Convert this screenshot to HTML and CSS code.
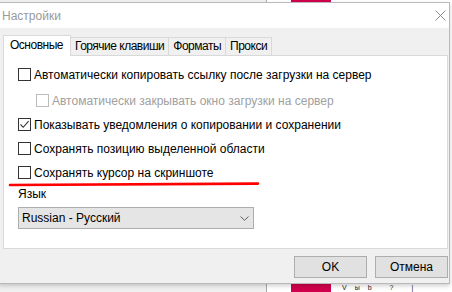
FILE: index.html
```html
<!DOCTYPE html>
<html lang="ru">
<head>
<meta charset="utf-8">
<title>Настройки</title>
<link rel="stylesheet" href="styles.css">
</head>
<body>
<div class="desk">
  <div class="desk-left"></div>
  <div class="desk-pink"></div>
  <div class="desk-text">Vыb ? |</div>

  <div class="dialog">
    <div class="titlebar">
      <span class="title">Настройки</span>
      <svg class="close" width="11" height="11" viewBox="0 0 11 11"><path d="M0.5 0.5 L10.5 10.5 M10.5 0.5 L0.5 10.5" stroke="#8c8c8c" stroke-width="1" fill="none"/></svg>
    </div>
    <div class="client">
      <div class="tabs">
        <div class="tab active">Основные</div>
        <div class="tab">Горячие клавиши</div>
        <div class="tab">Форматы</div>
        <div class="tab">Прокси</div>
      </div>
      <div class="panel">
        <div class="row first"><span class="box"></span><span>Автоматически копировать ссылку после загрузки на сервер</span></div>
        <div class="row sub disabled"><span class="box"></span><span>Автоматически закрывать окно загрузки на сервер</span></div>
        <div class="row"><span class="box"><svg width="11" height="11" viewBox="0 0 11 11"><path d="M1.5 5.5 L4.2 8.3 L9.6 2.2" stroke="#333" stroke-width="1.1" fill="none"/></svg></span><span>Показывать уведомления о копировании и сохранении</span></div>
        <div class="row"><span class="box"></span><span>Сохранять позицию выделенной области</span></div>
        <div class="row"><span class="box"></span><span>Сохранять курсор на скриншоте</span></div>
        <div class="lang-label">Язык</div>
        <div class="select">
          <span>Russian - Русский</span>
          <svg width="9" height="5" viewBox="0 0 9 5"><path d="M0.5 0.5 L4.5 4.3 L8.5 0.5" stroke="#606060" stroke-width="1" fill="none"/></svg>
        </div>
      </div>
      <div class="buttons">
        <div class="btn">OK</div>
        <div class="btn">Отмена</div>
      </div>
    </div>
    <svg class="redline" width="260" height="8" viewBox="0 0 260 8"><path d="M9 5 Q 130 4.6 257 3.6" stroke="#ff0000" stroke-width="2.6" stroke-linecap="round" fill="none"/></svg>
  </div>
</div>
</body>
</html>
```
FILE: styles.css
```css
* { box-sizing: border-box; }
html, body { margin: 0; padding: 0; }
body {
  width: 452px;
  height: 292px;
  overflow: hidden;
  font-family: "Liberation Sans", Arial, sans-serif;
  font-size: 12px;
  color: #000;
}
.desk {
  position: relative;
  width: 452px;
  height: 292px;
  background: #ffffff;
  overflow: hidden;
}
.desk-left {
  position: absolute;
  left: 0; top: 0;
  width: 267px; height: 292px;
  background: #f0f0f0;
  border-right: 1px solid #a8a8a8;
}
.desk-pink {
  position: absolute;
  left: 291px; top: 0;
  width: 40px; height: 292px;
  background: #d1004c;
}
.desk-text {
  position: absolute;
  left: 342px; top: 284px;
  font-size: 7px;
  line-height: 8px;
  letter-spacing: 8px;
  color: #222;
}
.dialog {
  position: absolute;
  left: -1px; top: 2px;
  width: 451px; height: 282px;
  border: 1px solid #b9b9b9;
  background: #f0f0f0;
  box-shadow: 0 2px 4px rgba(0,0,0,0.18);
  display: flex;
  flex-direction: column;
}
.titlebar {
  height: 25px;
  background: #fff;
  display: flex;
  align-items: center;
  justify-content: space-between;
  padding: 0 3px 0 2px;
}
.title {
  color: #9a9a9a;
  font-size: 12px;
}
.client {
  flex: 1;
  padding: 7px 1px 0 3px;
  display: flex;
  flex-direction: column;
}
.tabs {
  height: 20px;
  display: flex;
  align-items: flex-end;
}
.tab {
  height: 18px;
  line-height: 16px;
  padding: 0 4px;
  letter-spacing: -0.5px;
  border: 1px solid #d9d9d9;
  border-bottom: 0;
  margin-left: -1px;
  background: #f0f0f0;
  white-space: nowrap;
}
.tab.active {
  height: 21px;
  margin-bottom: -1px;
  margin-left: 0;
  line-height: 18px;
  padding: 0 7px 0 6px;
  background: #fff;
  position: relative;
  z-index: 1;
}
.panel {
  height: 194px;
  background: #fff;
  border: 1px solid #d9d9d9;
  padding: 11px 0 0 14px;
  display: flex;
  flex-direction: column;
  gap: 9px;
}
.row {
  height: 15px;
  display: flex;
  align-items: center;
  gap: 3px;
  white-space: nowrap;
}
.row.first { margin-bottom: 2px; }
.row.sub { margin-left: 18px; }
.box {
  width: 13px; height: 13px;
  border: 1px solid #333;
  background: #fff;
  flex: none;
  display: flex;
}
.row.disabled { color: #a0a0a0; }
.row.disabled .box { border-color: #bcbcbc; }
.lang-label {
  margin-top: -2px;
  line-height: 15px;
}
.select {
  margin-top: -4px;
  width: 236px;
  height: 22px;
  background: #e5e5e5;
  border: 1px solid #adadad;
  display: flex;
  align-items: center;
  justify-content: space-between;
  padding: 0 4px 0 3px;
}
.buttons {
  margin-top: 7px;
  display: flex;
  justify-content: flex-end;
  gap: 8px;
}
.btn {
  width: 73px;
  height: 22px;
  background: #e1e1e1;
  border: 1px solid #adadad;
  display: flex;
  align-items: center;
  justify-content: center;
}
.redline {
  position: absolute;
  left: 1px; top: 177px;
}
```
